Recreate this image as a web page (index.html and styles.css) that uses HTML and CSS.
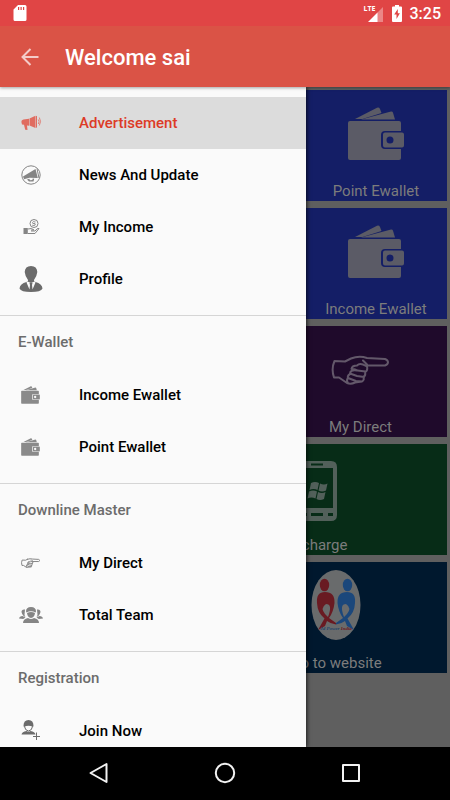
FILE: index.html
```html
<!DOCTYPE html>
<html lang="en">
<head>
<meta charset="utf-8">
<meta name="viewport" content="width=device-width, initial-scale=1">
<title>Welcome sai</title>
<link rel="stylesheet" href="styles.css">
</head>
<body>
<svg class="defs" aria-hidden="true">
  <symbol id="wallet" viewBox="0 0 56 54">
    <path d="M7 12 29 .8Q31 0 32 2l1.500 4-19 6z"/>
    <path d="M13 12.500 43 4.500q1.500-.3 2 1.300l2 6.700z"/>
    <path d="M2 14h49q2 0 2 2v8H37q-4 0-4 4v10q0 4 4 4h16v9q0 2-2 2H2q-2 0-2-2V16q0-2 2-2z"/>
    <path fill-rule="evenodd" d="M37 25.500h17q2 0 2 2v11q0 2-2 2H37q-2 0-2-2v-11q0-2 2-2zM42 29.500a3.500 3.500 0 1 0 0 7 3.500 3.500 0 0 0 0-7z"/>
  </symbol>
  <symbol id="hand" viewBox="0 0 58 30">
    <path fill="none" stroke="currentColor" stroke-linejoin="round" stroke-linecap="round" d="M20 3.500 14 6.500 3.500 6Q0 14 3 22.500H8l8 5.500q4 1.500 8-.500l7-1q3-2 1-4.500 3-1 2-5 3-1 2-5.500l-1.500-1H54q3-1 3-3.200T54 4L36 3q-8-2.500-16 .5zM36 9.500 32 5.500M35 11q-6-3.500-9-.500-5 0-5.500 3.500 3-.5 6 1.500l8 1M26 15.500q-7-1-7 3l7 2.500 7 1M20 18.500q-4 2-3 4.500l8 3 6 .5M17 23q-2 2 0 5"/>
  </symbol>
</svg>

<header class="top">
  <div class="status">
    <svg class="sd" viewBox="0 0 14 17" aria-hidden="true"><path fill="#fff" fill-rule="evenodd" d="M5 0h7q1.500 0 1.500 1.500v13q0 1.500-1.500 1.500H2Q.5 16 .5 14.500v-10zM5 2v3h1.200V2zm2.500 0v3h1.200V2zM10 2v3h1.200V2z"/></svg>
    <div class="status-right">
      <div class="signal">
        <span class="lte">LTE</span>
        <svg class="bars" viewBox="0 0 15 15" aria-hidden="true"><path fill="#fff" opacity=".35" d="M15 0v15H9V6z"/><path fill="#fff" d="M9.500 5.500V15H0z"/></svg>
      </div>
      <svg class="battery" viewBox="0 0 10 17" aria-hidden="true"><path fill="#fff" fill-rule="evenodd" d="M3 0h4v1.500h2q1 0 1 1V16q0 1-1 1H1q-1 0-1-1V2.500q0-1 1-1h2zM5.800 4 2.200 9.500h2.300V14l3.400-5.800H5.800z"/></svg>
      <span class="clock">3:25</span>
    </div>
  </div>
  <div class="appbar">
    <button class="back" type="button" aria-label="Back">
      <svg viewBox="0 0 18 18" aria-hidden="true"><path fill="none" stroke="#fff" stroke-width="2" d="M17.500 9H2M9.500 1 1.500 9l8 8"/></svg>
    </button>
    <h1>Welcome sai</h1>
  </div>
</header>

<main class="stage">
  <div class="board">
    <a class="tile narrow blue" href="#"><svg class="wallet" aria-hidden="true"><use href="#wallet"/></svg><span>Point Ewallet</span></a>
    <a class="tile narrow blue" href="#"><svg class="wallet" aria-hidden="true"><use href="#wallet"/></svg><span>Income Ewallet</span></a>
    <a class="tile medium purple" href="#"><svg class="hand" aria-hidden="true"><use href="#hand"/></svg><span>My Direct</span></a>
    <a class="tile widest green" href="#">
      <svg class="phone" viewBox="0 0 42 60" aria-hidden="true"><path fill-rule="evenodd" d="M6 0h30q6 0 6 6v48q0 6-6 6H6q-6 0-6-6V6q0-6 6-6zM4 7v40h34V7zM16 2.500v2h12v-2zM16 52v3h12v-3zM5 52v3h7v-3zM33 52v3h5v-3z"/><path d="M16 22q4-2 8 0l-1.500 7q-4-2-8 0zM25 22.500q4 2 7.500 0l-1.500 7q-4 2-7.500 0zM14 30.500q4-2 8 0l-1.500 7q-4-2-8 0zM23 31q4 2 7.500 0L29 38q-4 2-7.500 0z"/></svg>
      <span>Recharge</span></a>
    <a class="tile wide navy" href="#">
      <svg class="logo" viewBox="0 0 50 70" aria-hidden="true">
        <ellipse cx="25" cy="35" rx="24.500" ry="35" fill="#696b6c"/>
        <g fill="#691a22"><ellipse cx="13.500" cy="15" rx="4.700" ry="6.300"/><path fill-rule="evenodd" d="M6 33Q5 22 14 22q10 0 9.500 11Q22.500 42 18 48l7 5v1.500q-5-.5-9-3.500l-2 5-7 4 6.500-11.500Q6.500 43 6 33zM15 34q-6 4-1 10l3 3q5-13-2-13z"/></g>
        <g fill="#1b477b"><ellipse cx="36.500" cy="15" rx="4.700" ry="6.300"/><path fill-rule="evenodd" d="M44 33q1-11-8-11-10 0-9.500 11Q27.500 42 32 48l-7 5v1.500q5-.5 9-3.500l2 5 7 4-6.500-11.500Q43.500 43 44 33zM35 34q6 4 1 10l-3 3q-5-13 2-13z"/></g>
        <text x="25" y="60" text-anchor="middle" class="logo-name"><tspan fill="#22436b">Jd Power</tspan> <tspan fill="#691a22">India</tspan></text>
      </svg>
      <span>Go to website</span></a>
  </div>

  <nav class="drawer" aria-label="Main menu">
    <a class="item active" href="#">
      <svg class="icon" viewBox="0 0 24 24" aria-hidden="true"><g fill="currentColor"><path d="M4.500 8.500Q2 9 2.500 11.500l.5 2 2 .3 1.200 5 2.300.2-.5-4.500 2 .3v-7zM10.500 7.500l6-2.800V17l-6-2.500zM17 4.700l1 .5v11l-1 .7z"/></g><path fill="none" stroke="currentColor" stroke-width=".8" d="M19.300 8.500q1.500 2 0 4.500M20.300 6.500q2.500 4 0 8"/></svg>
      <span>Advertisement</span></a>
    <a class="item" href="#">
      <svg class="icon" viewBox="0 0 24 24" aria-hidden="true"><circle cx="12" cy="12" r="9.200" fill="none" stroke="currentColor" stroke-width="1"/><path fill="currentColor" d="M4 13.500 16.500 6l2.300 9-8.300-.3L5 16.200zM17.500 5.500l1 .2L20.500 15l-1 .3zM8 16.500l2 2h4.500l.7-2.700-1.400-.2-.5 1.500-2.300.1-.7-1.500z"/></svg>
      <span>News And Update</span></a>
    <a class="item" href="#">
      <svg class="icon" viewBox="0 0 24 24" aria-hidden="true"><path fill="currentColor" d="M4.500 13h4.300v6H4.500z"/><g fill="none" stroke="currentColor"><circle cx="15" cy="8.500" r="4"/><path d="M9 14q4-1.500 6 1h-3M9 18.500h7l4-5q-1.500-1-4 2.500h-4"/><path stroke-width=".9" d="M16.500 7q-3-1-3 .5t1.500 1 1.200 1.500q-1 1-3 .2"/></g></svg>
      <span>My Income</span></a>
    <a class="item" href="#">
      <svg class="icon large" viewBox="0 0 28 28" aria-hidden="true"><path fill="#6b6b6b" d="M14 1q6 0 6.300 6-.5 4.500-3.300 8-.5 1.500 1.500 2 6.500 1.500 7 6.500Q24 27 14 27T2.500 23.500q.5-5 7-6.500 2-.5 1.500-2Q8.200 11.500 7.700 7 8 1 14 1z"/><path fill="#fafafa" d="m10.500 16.500 3.500 1.500 3.500-1.500 1 1-3 7-.5-4.500.5-2h-3l.5 2-.5 4.500-3-7z"/></svg>
      <span>Profile</span></a>

    <h2>E-Wallet</h2>
    <a class="item" href="#"><svg class="icon small" aria-hidden="true"><use href="#wallet"/></svg><span>Income Ewallet</span></a>
    <a class="item" href="#"><svg class="icon small" aria-hidden="true"><use href="#wallet"/></svg><span>Point Ewallet</span></a>

    <h2>Downline Master</h2>
    <a class="item" href="#"><svg class="icon small point" aria-hidden="true"><use href="#hand"/></svg><span>My Direct</span></a>
    <a class="item" href="#">
      <svg class="icon" viewBox="0 0 24 24" aria-hidden="true"><g fill="currentColor"><path d="M7 8.500Q7 4 12 4t5 4.500l-.5 1Q12 7 7.500 9.500zM8 10q4-2 8 0-.5 4.500-4 5-3.500-.5-4-5zM4 20q0-4 5-5 3 2 6 0 5 1 5 5z"/><path d="M2.500 9Q2.500 6 6 6.500l-.5 5.500.9 2q-3-1-3.900-5zM21.500 9q0-3-3.500-2.500l.5 5.500-.9 2q3-1 3.900-5zM0 15.500Q.5 13 3.500 13l3 1.500-2.300 1.500zM24 15.500q-.5-2.500-3.500-2.500l-3 1.500 2.300 1.500z"/></g></svg>
      <span>Total Team</span></a>

    <h2>Registration</h2>
    <a class="item" href="#">
      <svg class="icon" viewBox="0 0 24 24" aria-hidden="true"><g fill="#6b6b6b"><path d="M4.500 7Q4.500 1 9.500 1t5 6l-.5 1Q9.500 5.500 5 8zM2.500 15.500q.5-3 5-3.500 2 1.500 4 0 4.500.5 5 3.500z"/></g><path fill="none" stroke="#6b6b6b" d="M5.500 7.500q.5 4 4 4.500 3.500-.5 4-4.500M17.500 13.500v7.500M14 17.500h7"/></svg>
      <span>Join Now</span></a>
  </nav>
</main>

<footer class="system">
  <button type="button" aria-label="Back"><svg viewBox="0 0 22 22" aria-hidden="true"><path d="M18.500 2v18L2.500 11z"/></svg></button>
  <button type="button" aria-label="Home"><svg viewBox="0 0 22 22" aria-hidden="true"><circle cx="11" cy="11" r="9.200"/></svg></button>
  <button type="button" aria-label="Recent apps"><svg viewBox="0 0 22 22" aria-hidden="true"><path d="M3 3h16v16H3z"/></svg></button>
</footer>
</body>
</html>
```
FILE: styles.css
```css
* { box-sizing: border-box; }

body {
  margin: 0;
  height: 100vh;
  display: flex;
  flex-direction: column;
  overflow: hidden;
  font-family: Roboto, "Liberation Sans", sans-serif;
  font-size: 15px;
  background: #000;
}

a { color: inherit; text-decoration: none; }
button { border: 0; padding: 0; background: none; display: flex; }
svg { display: block; flex: none; }
.defs { position: absolute; width: 0; height: 0; }

.top { position: relative; z-index: 2; color: #fff; box-shadow: 0 1px 3px rgba(0, 0, 0, .35); }
.status {
  display: flex;
  align-items: center;
  justify-content: space-between;
  height: 26px;
  padding: 0 9px 0 13px;
  background: #e04545;
}
.sd { width: 14px; height: 17px; }
.status-right { display: flex; align-items: center; gap: 8px; }
.signal { position: relative; width: 20px; height: 17px; }
.bars { width: 15px; height: 15px; margin: 2px 0 0 4px; }
.lte { position: absolute; left: 0; top: 0; font: 700 7px/8px "Open Sans", sans-serif; }
.battery { width: 10px; height: 17px; }
.clock { font-size: 16px; font-weight: 500; line-height: 26px; padding-top: 1px; }

.appbar { display: flex; align-items: center; gap: 26px; height: 61px; padding: 0 21px; background: #da5346; }
.back svg { width: 18px; height: 18px; opacity: .7; }
h1 { margin: 0; padding-top: 2px; font-size: 22px; font-weight: 500; line-height: 26px; }

.stage { position: relative; flex: 1; min-height: 0; overflow: hidden; background: #5f5f5f; }

.board { display: flex; flex-direction: column; align-items: flex-end; gap: 7px; padding: 3px; }
.tile {
  display: flex;
  flex-direction: column;
  align-items: center;
  justify-content: space-between;
  height: 111px;
  padding: 17px 0 0;
  line-height: 19px;
  color: #7c7c7c;
  fill: #5b5b66;
}
.narrow { width: 32%; }
.medium { width: 39%; }
.wide { width: 50%; }
.widest { width: 59%; }
.blue { background: #141e66; }
.purple { background: #1f0a2b; }
.green { background: #072c17; fill: #52605a; }
.navy { background: #00182e; padding-top: 8px; }
.wallet { width: 56px; height: 54px; }
.tile .hand { width: 58px; height: 30px; margin-top: 12px; color: #63586a; stroke-width: 2; }
.phone { width: 42px; height: 60px; }
.logo { width: 50px; height: 70px; }
.logo-name { font: italic 700 5px "Liberation Serif", serif; }

.drawer {
  position: absolute;
  inset: 0 32% 0 0;
  padding-top: 10px;
  overflow: hidden;
  background: #fafafa;
  box-shadow: 1px 0 4px rgba(0, 0, 0, .7);
  font-weight: 500;
}
.item { display: flex; align-items: center; gap: 36px; height: 52px; padding: 0 18px 0 19px; color: #000; }
.item .icon { width: 24px; height: 24px; color: #858585; fill: #8a8a8a; }
.item .small { width: 19px; height: 18px; margin: 0 3px 0 2px; }
.item .point { stroke-width: 3; }
.item .large { width: 28px; height: 28px; margin: 0 -2px; }
.item.active { background: #dcdcdc; color: #dd3b27; }
.item.active .icon { color: #e06c60; }
h2 {
  margin: 10px 0 0;
  padding: 0 18px;
  border-top: 1px solid #d5d5d5;
  color: #6c6c6c;
  font-size: 15px;
  font-weight: 500;
  line-height: 53px;
}

.system { display: flex; justify-content: center; gap: 104px; padding: 15px 0 16px; background: #000; }
.system svg { width: 22px; height: 22px; fill: none; stroke: #f2f2f2; stroke-width: 2; stroke-linejoin: round; }
```
